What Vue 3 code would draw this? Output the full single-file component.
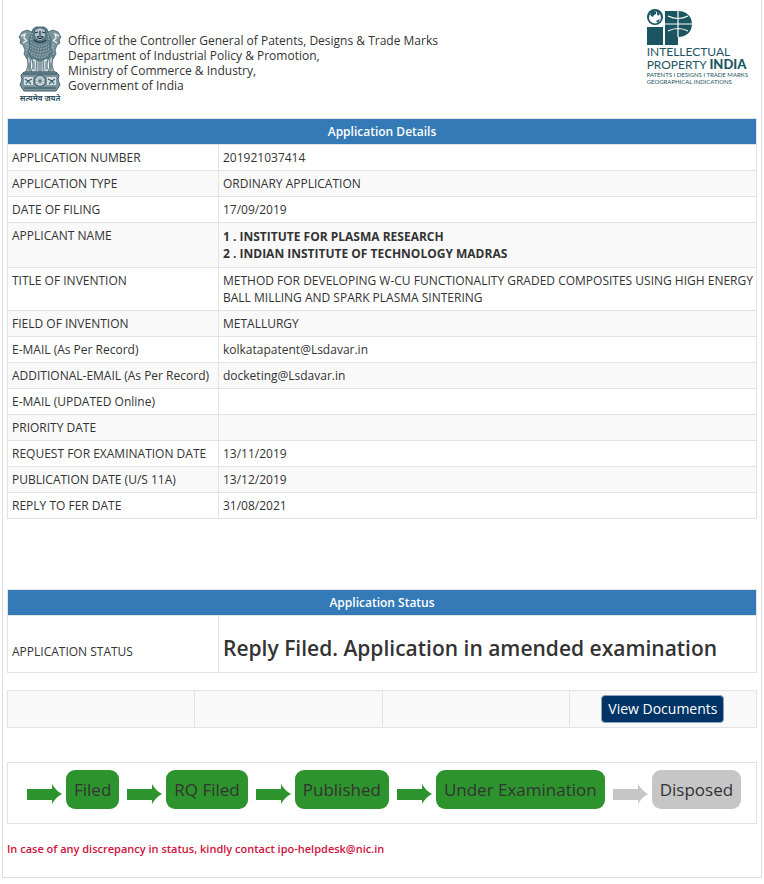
<template>
  <main class="page">
    <header class="header">
      <div class="office">
        <div class="emblem">
          <svg viewBox="0 0 44 66" width="44" height="66" aria-hidden="true">
            <g fill="#7c949d" stroke="#3c5f6d" stroke-width="0.8">
              <!-- side lions -->
              <path d="M14 6 L9 4 L4 6 L1 11 L3 14 L2 17 L5 19 L7 24 L6 28 L9 33 L16 33 L18 12 Z" />
              <path d="M30 6 L35 4 L40 6 L43 11 L41 14 L42 17 L39 19 L37 24 L38 28 L35 33 L28 33 L26 12 Z" />
              <!-- legs -->
              <path d="M9 29 L13 33 L12 46 L8 46 L10 39 Z M35 29 L31 33 L32 46 L36 46 L34 39 Z" fill="#b4c1c6" />
              <path d="M14 31 L19 32 L18 46 L13 46 L15 40 Z M30 31 L25 32 L26 46 L31 46 L29 40 Z" fill="#dde4e6" />
              <path d="M20 31 H24 L24 46 H20 Z" fill="#c3ced2" />
              <!-- front lion -->
              <path d="M15 3 L18 1 H26 L29 3 L31 9 L33 14 L32 22 L35 26 L30 32 L22 35 L14 32 L9 26 L12 22 L11 14 L13 9 Z" fill="#617f8a" />
            </g>
            <path d="M17 3 Q22 0 27 3 L28 9 L26 13 L22 15 L18 13 L16 9 Z" fill="#b4c1c6" stroke="#3c5f6d" />
            <path d="M17 7 L20 6 M24 6 L27 7 M22 5 V9 M19 11 Q22 9 25 11 Q22 14 19 11 M16 14 Q22 19 28 14" fill="none" stroke="#17394a" stroke-width="1.2" />
            <path d="M3 10 L7 8 L6 12 L9 15 M41 10 L37 8 L38 12 L35 15 M5 17 L8 15 M39 17 L36 15" fill="none" stroke="#e8edef" stroke-width="1.4" />
            <g fill="none" stroke="#c3ced2" stroke-width="0.9" stroke-dasharray="1.3 1.5">
              <path d="M13 16 Q22 24 31 16 M12 19 Q22 27 32 19 M12 22 Q22 30 32 22 M11 25 Q22 33 33 25 M13 28 Q22 35 31 28" />
              <path d="M9 18 V27 M35 18 V27 M14 7 L13 14 M30 7 L31 14" />
            </g>
            <path d="M11 37 V44 M16 35 V44 M22 35 V45 M28 35 V44 M33 37 V44" stroke="#3c5f6d" stroke-width="0.8" />
            <!-- abacus with wheel -->
            <path d="M6 46 H38 L41 49 L40 54 L42 59 L38 65 H6 L2 59 L4 54 L3 49 Z" fill="#7c949d" stroke="#3c5f6d" />
            <path d="M5 48 H39 M6 62 H38" stroke="#2b5060" stroke-width="1.2" />
            <path d="M6 51 H15 V59 H6 Z M29 51 H38 V59 H29 Z" fill="#d5dee1" />
            <path d="M7 53 L10 55 L14 53 M8 58 L10 55 L13 58 M37 53 L34 55 L30 53 M36 58 L34 55 L31 58" fill="none" stroke="#3c5f6d" stroke-width="1.2" />
            <circle cx="22" cy="55" r="5.5" fill="#d3dcdf" stroke="#3c5f6d" stroke-width="1.2" />
            <path d="M22 50 V60 M17 55 H27 M18.5 51.5 L25.5 58.5 M25.5 51.5 L18.5 58.5" stroke="#7c949d" stroke-width="0.8" />
            <circle cx="22" cy="55" r="1.6" fill="#53727e" />
          </svg>
          <span class="motto" lang="hi">सत्यमेव जयते</span>
        </div>
        <p class="office-name">
          Office of the Controller General of Patents, Designs &amp; Trade Marks<br />
          Department of Industrial Policy &amp; Promotion,<br />
          Ministry of Commerce &amp; Industry,<br />
          Government of India
        </p>
      </div>

      <div class="ip-logo">
        <svg viewBox="0 0 46 36" width="46" height="36" aria-hidden="true">
          <g fill="#1b5561">
            <rect x="0" y="18" width="16" height="18" />
            <path d="M18 2 H31 C40 2 45 8 45 15 C45 22 40 28 31 28 V36 H18 Z" />
            <circle cx="8" cy="8" r="8" />
          </g>
          <circle cx="8" cy="8.5" r="6" fill="#fff" />
          <path d="M3 5 L6 2 L9 3 L9 5 L7 6 L6 8 L4 7 Z M10 2 L13 5 L11 7 L10 5 Z M9 12 L13 10 L11 14 Z" fill="#1b5561" />
          <path d="M31 2 V28 M18 15 H45 M21 7 Q31 12 41 7 M21 22 Q31 17 41 22" fill="none" stroke="#fff" stroke-width="1.2" />
        </svg>
        <span class="logo-name">INTELLECTUAL</span>
        <span class="logo-name">PROPERTY <b>INDIA</b></span>
        <span class="logo-sub">PATENTS I DESIGNS I TRADE MARKS</span>
        <span class="logo-sub">GEOGRAPHICAL INDICATIONS</span>
      </div>
    </header>

    <table class="grid details">
      <colgroup>
        <col class="label-col" />
        <col />
      </colgroup>
      <thead>
        <tr>
          <th colspan="2">Application Details</th>
        </tr>
      </thead>
      <tbody>
        <tr v-for="row in details" :key="row.label">
          <td>{{ row.label }}</td>
          <td v-if="row.list">
            <div class="applicants">
              <div v-for="(name, i) in row.list" :key="name">{{ i + 1 }} . {{ name }}</div>
            </div>
          </td>
          <td v-else>{{ row.value }}</td>
        </tr>
      </tbody>
    </table>

    <table class="grid status">
      <colgroup>
        <col class="label-col" />
        <col />
      </colgroup>
      <thead>
        <tr>
          <th colspan="2">Application Status</th>
        </tr>
      </thead>
      <tbody>
        <tr>
          <td class="label">APPLICATION STATUS</td>
          <td><h2>{{ status }}</h2></td>
        </tr>
      </tbody>
    </table>

    <table class="grid actions">
      <tbody>
        <tr>
          <td></td>
          <td></td>
          <td></td>
          <td><button type="button">View Documents</button></td>
        </tr>
      </tbody>
    </table>

    <div class="steps">
      <div v-for="step in steps" :key="step.name" class="step" :class="{ done: step.done }">
        <svg class="arrow" viewBox="0 0 35 20" width="35" height="20" aria-hidden="true">
          <path d="M0 5 H25 V0 Q29 7 35 10 Q29 13 25 20 V16 H0 Z" fill="currentColor" />
        </svg>
        <span class="pill">{{ step.name }}</span>
      </div>
    </div>

    <p class="note">In case of any discrepancy in status, kindly contact ipo-helpdesk@nic.in</p>
  </main>
</template>

<script setup>
import { ref } from "vue";

const details = ref([
  { label: "APPLICATION NUMBER", value: "201921037414" },
  { label: "APPLICATION TYPE", value: "ORDINARY APPLICATION" },
  { label: "DATE OF FILING", value: "17/09/2019" },
  {
    label: "APPLICANT NAME",
    list: ["INSTITUTE FOR PLASMA RESEARCH", "INDIAN INSTITUTE OF TECHNOLOGY MADRAS"],
  },
  {
    label: "TITLE OF INVENTION",
    value: "METHOD FOR DEVELOPING W-CU FUNCTIONALITY GRADED COMPOSITES USING HIGH ENERGY BALL MILLING AND SPARK PLASMA SINTERING",
  },
  { label: "FIELD OF INVENTION", value: "METALLURGY" },
  { label: "E-MAIL (As Per Record)", value: "kolkatapatent@Lsdavar.in" },
  { label: "ADDITIONAL-EMAIL (As Per Record)", value: "docketing@Lsdavar.in" },
  { label: "E-MAIL (UPDATED Online)", value: "" },
  { label: "PRIORITY DATE", value: "" },
  { label: "REQUEST FOR EXAMINATION DATE", value: "13/11/2019" },
  { label: "PUBLICATION DATE (U/S 11A)", value: "13/12/2019" },
  { label: "REPLY TO FER DATE", value: "31/08/2021" },
]);

const status = ref("Reply Filed. Application in amended examination");

const steps = ref([
  { name: "Filed", done: true },
  { name: "RQ Filed", done: true },
  { name: "Published", done: true },
  { name: "Under Examination", done: true },
  { name: "Disposed", done: false },
]);
</script>

<style>
body {
  background: #fff;
}
</style>

<style scoped>
.page {
  margin: 0 2px;
  padding: 0 4px 20px;
  border: 1px solid #ddd;
  border-top: 0;
  font-family: "Open Sans", "Noto Sans", sans-serif;
  font-size: 12px;
  line-height: 17px;
  color: #333;
}
.header {
  display: flex;
  justify-content: space-between;
  padding: 9px 9px 14px 11px;
}
.office {
  display: flex;
  gap: 6px;
  padding-top: 17px;
}
.emblem {
  display: flex;
  flex-direction: column;
  align-items: center;
}
.motto {
  font-size: 8px;
  line-height: 12px;
  font-weight: 600;
  color: #23495a;
  white-space: nowrap;
}
.office-name {
  margin: 7px 0 0;
  line-height: 15px;
}
.ip-logo {
  display: flex;
  flex-direction: column;
  font-family: Lato, sans-serif;
  color: #1b5561;
  white-space: nowrap;
}
.logo-name {
  font-size: 12px;
  line-height: 13px;
}
.logo-name b {
  font-size: 13px;
  font-weight: 900;
}
.logo-sub {
  font-size: 6px;
  line-height: 7px;
}
.grid {
  width: 100%;
  border-collapse: collapse;
  table-layout: fixed;
}
.grid th,
.grid td {
  padding: 4px 0 4px 4px;
  border: 1px solid #e3e3e3;
  text-align: left;
  vertical-align: top;
}
.grid th {
  padding: 4px;
  background: #337ab7;
  color: #fff;
  text-align: center;
  font-weight: 600;
}
.grid td:empty {
  height: 17px;
}
.label-col {
  width: 211px;
}
.details {
  margin-bottom: 70px;
}
.details tbody tr:nth-child(even),
.actions tr {
  background: #f9f9f9;
}
.applicants {
  padding: 1px 0;
  font-weight: 700;
}
.status {
  margin-bottom: 17px;
}
.grid .label {
  vertical-align: middle;
  padding-top: 18px;
}
.status h2 {
  margin: 17px 0 9px;
  font-size: 21px;
  line-height: 22px;
  font-weight: 600;
}
.actions {
  margin-bottom: 34px;
}
.grid.actions td {
  padding: 4px;
  text-align: center;
}
.actions button {
  display: inline-block;
  padding: 4px 6px;
  border: 1px solid #8aa0bb;
  border-radius: 4px;
  background: #036;
  color: #fff;
  font-family: inherit;
  font-size: 14px;
  line-height: 18px;
  cursor: pointer;
}
.steps {
  display: flex;
  flex-wrap: wrap;
  gap: 8px;
  padding: 7px 13px 14px 19px;
  border: 1px solid #e3e3e3;
}
.step {
  display: flex;
  align-items: center;
  gap: 4px;
  color: #c6c6c6;
}
.step.done {
  color: #2d942d;
}
.arrow {
  margin-top: 8px;
}
.pill {
  padding: 8px;
  border-radius: 9px;
  background: #c6c6c6;
  color: #333;
  font-size: 17px;
  line-height: 23px;
}
.done .pill {
  background: #2d942d;
}
.note {
  margin: 16px 0 0;
  font-size: 11px;
  font-weight: 600;
  color: #d0123c;
}
</style>
